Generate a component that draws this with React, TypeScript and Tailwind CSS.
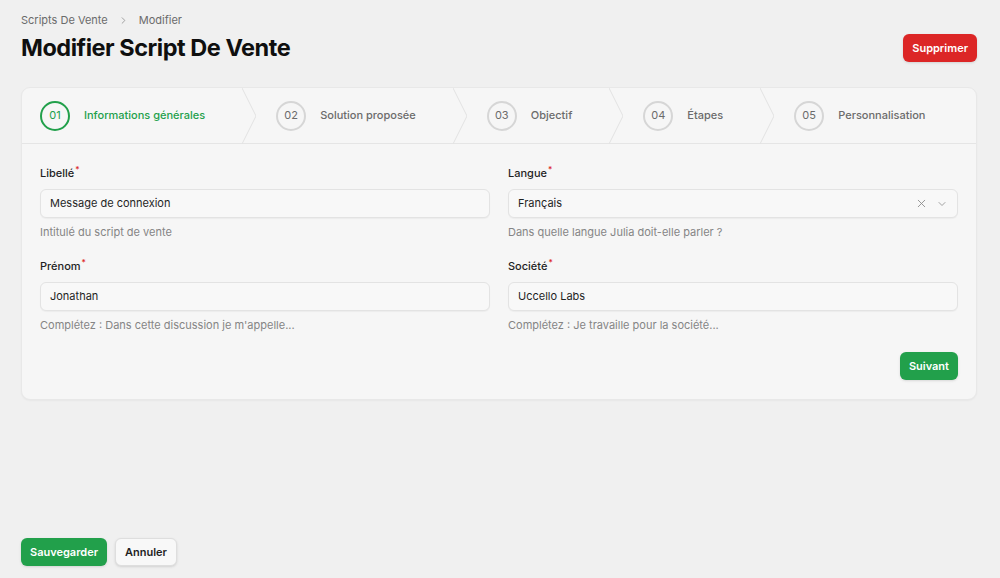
import { X, ChevronDown, ChevronRight } from "lucide-react";

const steps = [
  { num: "01", label: "Informations générales", active: true },
  { num: "02", label: "Solution proposée" },
  { num: "03", label: "Objectif" },
  { num: "04", label: "Étapes" },
  { num: "05", label: "Personnalisation" },
];

function Field({
  label,
  value,
  hint,
  select,
}: {
  label: string;
  value: string;
  hint: string;
  select?: boolean;
}) {
  return (
    <div className="flex flex-col">
      <div className="text-[11px] font-medium text-[#1f1f1f] leading-4 mb-[8px]">
        {label}
        <sup className="text-[#dc2626] font-medium ml-[1px]">*</sup>
      </div>
      <div className="h-[29px] rounded-[6px] border border-[#e3e3e3] bg-[#f8f8f8] shadow-[0_1px_1px_rgba(0,0,0,0.04)] flex items-center px-[9px] text-[11px] text-[#1f1f1f]">
        <span className="flex-1">{value}</span>
        {select && (
          <div className="flex items-center gap-[8px] text-[#8a8a8a]">
            <X size={13} strokeWidth={1.6} />
            <ChevronDown size={12} strokeWidth={1.6} />
          </div>
        )}
      </div>
      <div className="text-[11px] text-[#858585] mt-[6px] leading-4">{hint}</div>
    </div>
  );
}

export default function App() {
  return (
    <div
      className="h-[578px] bg-[#f0f0f0] flex flex-col pl-[21px] pr-[23px] pt-[12px] pb-[12px] overflow-hidden"
      style={{ fontFamily: "Inter, 'Noto Sans', sans-serif" }}
    >
      <div className="flex items-center text-[11px] text-[#6b6b6b] leading-4">
        <span>Scripts De Vente</span>
        <ChevronRight size={11} className="mx-[10px] text-[#9a9a9a]" />
        <span>Modifier</span>
      </div>

      <div className="flex items-center justify-between mt-[5px]">
        <h1 className="text-[23.5px] font-bold tracking-[-0.02em] text-[#0f0f0f] leading-[30px]">
          Modifier Script De Vente
        </h1>
        <button className="h-[28px] px-[9px] rounded-[6px] bg-[#dc2626] text-white text-[11px] font-semibold shadow-sm">
          Supprimer
        </button>
      </div>

      <div className="mt-[24px] rounded-[9px] bg-[#f6f6f6] border border-[#e8e8e8] shadow-[0_1px_2px_rgba(0,0,0,0.04)]">
        <div className="flex h-[56px] border-b border-[#e5e5e5]">
          {steps.map((s, i) => (
            <div key={s.num} className="flex h-full">
              <div
                className={`flex items-center gap-[14px] pr-[37px] ${
                  i === 0 ? "pl-[18px]" : "pl-[20px]"
                }`}
              >
                <div
                  className={`w-[30px] h-[30px] rounded-full flex items-center justify-center text-[11px] ${
                    s.active
                      ? "border-2 border-[#22a04b] text-[#22a04b]"
                      : "border-2 border-[#d6d6d6] text-[#6b6b6b]"
                  }`}
                >
                  {s.num}
                </div>
                <span
                  className={`text-[11px] font-medium ${
                    s.active ? "text-[#22a04b]" : "text-[#6b6b6b]"
                  }`}
                >
                  {s.label}
                </span>
              </div>
              {i < steps.length - 1 && (
                <svg width="14" height="56" viewBox="0 0 14 56" className="shrink-0">
                  <path d="M0 0 L14 28 L0 56" fill="none" stroke="#e2e2e2" strokeWidth="1" />
                </svg>
              )}
            </div>
          ))}
        </div>

        <div className="px-[18px] pt-[21px] pb-[19px]">
          <div className="grid grid-cols-2 gap-x-[18px] gap-y-[18px]">
            <Field label="Libellé" value="Message de connexion" hint="Intitulé du script de vente" />
            <Field label="Langue" value="Français" hint="Dans quelle langue Julia doit-elle parler ?" select />
            <Field label="Prénom" value="Jonathan" hint="Complétez : Dans cette discussion je m'appelle..." />
            <Field label="Société" value="Uccello Labs" hint="Complétez : Je travaille pour la société..." />
          </div>
          <div className="flex justify-end mt-[19px]">
            <button className="h-[28px] px-[9px] rounded-[6px] bg-[#22a04b] text-white text-[11px] font-semibold shadow-sm">
              Suivant
            </button>
          </div>
        </div>
      </div>

      <div className="mt-auto flex items-center gap-[8px]">
        <button className="h-[28px] px-[9px] rounded-[6px] bg-[#22a04b] text-white text-[11px] font-semibold shadow-sm">
          Sauvegarder
        </button>
        <button className="h-[28px] px-[9px] rounded-[6px] bg-[#f8f8f8] border border-[#dedede] text-[#1f1f1f] text-[11px] font-semibold shadow-sm">
          Annuler
        </button>
      </div>
    </div>
  );
}
